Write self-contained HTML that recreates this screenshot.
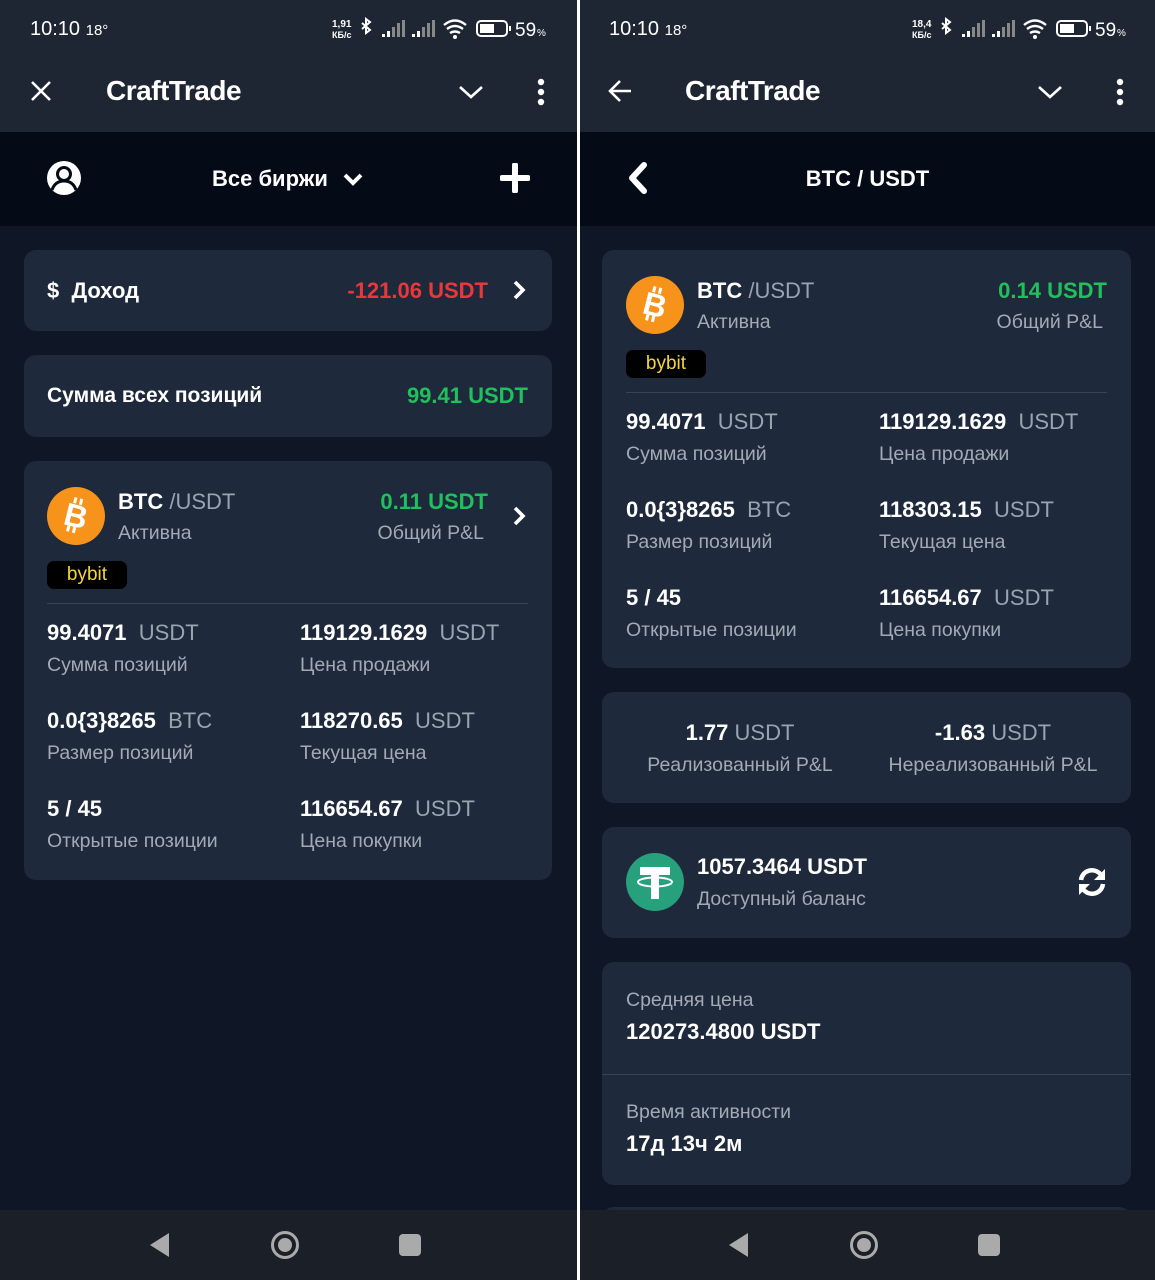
<!DOCTYPE html>
<html><head><meta charset="utf-8"><style>
*{margin:0;padding:0;box-sizing:border-box}
body{width:1155px;height:1280px;background:#fff;position:relative;overflow:hidden;font-family:"Liberation Sans",Arial,sans-serif;color:#fff}
.ph{position:absolute;top:0;height:1280px;background:#0f1727;overflow:hidden}
.sb{position:absolute;left:0;right:0;top:0;height:132px;background:#1f2633}
.sub{position:absolute;left:0;right:0;top:132px;height:94px;background:#050a17}
.card{position:absolute;background:#1e293b;border-radius:12px}
.t{position:absolute;white-space:nowrap;line-height:30px;height:30px}
.b{font-weight:bold}
.v{font-size:22px;font-weight:bold}
.u{font-size:22px;color:#9aa3b0;font-weight:normal}
.l{font-size:19.5px;color:#a3aab5}
.g{color:#20c05c}
.nav{position:absolute;left:0;right:0;top:1210px;height:70px;background:#1b1f27}
.div{position:absolute;height:1px;background:#374357}
.badge{position:absolute;background:#000;border-radius:7px;color:#f5d53a;font-size:19px;text-align:center;line-height:28px;height:28px;width:80px}
</style></head><body>

<!-- LEFT PHONE -->
<div class="ph" style="left:0;width:577px">
 <div class="sb"></div>
 <div class="t" style="left:30px;top:14px;font-size:20px">10:10 <span style="font-size:15px">18°</span></div>
 <svg style="position:absolute;left:332px;top:16px" width="220" height="26" viewBox="0 0 220 26">
  <text x="0" y="11" font-size="10" font-weight="bold" fill="#fff" font-family="Liberation Sans">1,91</text>
  <text x="0" y="22" font-size="9" font-weight="bold" fill="#fff" font-family="Liberation Sans">КБ/с</text>
  <path d="M30 7l8 7-4 3V3l4 3-8 7" stroke="#fff" stroke-width="2" fill="none"/>
  <g fill="#fff"><rect x="50" y="18" width="3" height="3"/><rect x="55" y="15" width="3" height="6"/></g><g fill="#888"><rect x="60" y="11" width="3" height="10"/><rect x="65" y="7" width="3" height="14"/><rect x="70" y="4" width="3" height="17"/></g>
  <g fill="#fff"><rect x="80" y="18" width="3" height="3"/><rect x="85" y="15" width="3" height="6"/></g><g fill="#888"><rect x="90" y="11" width="3" height="10"/><rect x="95" y="7" width="3" height="14"/><rect x="100" y="4" width="3" height="17"/></g>
  <path d="M112 9q11-9 22 0M115 13q8-6 16 0M118 17q5-3 10 0" stroke="#fff" stroke-width="2.4" fill="none"/><circle cx="123" cy="21" r="2" fill="#fff"/>
  <rect x="145" y="5" width="30" height="15" rx="4" stroke="#fff" stroke-width="2" fill="none"/><rect x="148" y="8" width="14" height="9" fill="#fff"/><rect x="177" y="10" width="2" height="5" fill="#fff"/>
  <text x="183" y="20" font-size="19" fill="#fff" font-family="Liberation Sans">59</text><text x="205" y="20" font-size="10" fill="#fff" font-family="Liberation Sans">%</text>
 </svg>
 <svg style="position:absolute;left:30px;top:80px" width="22" height="22"><path d="M2 2l18 18M20 2L2 20" stroke="#fff" stroke-width="2.6"/></svg>
 <div class="t" style="left:106px;top:74px;font-size:28px;line-height:34px;height:34px;font-weight:bold;letter-spacing:-0.5px">CraftTrade</div>
 <svg style="position:absolute;left:458px;top:84px" width="26" height="16"><path d="M2 3l11 10 11-10" stroke="#fff" stroke-width="2.6" fill="none"/></svg>
 <svg style="position:absolute;left:536px;top:78px" width="10" height="28"><circle cx="5" cy="4" r="3.2" fill="#fff"/><circle cx="5" cy="14" r="3.2" fill="#fff"/><circle cx="5" cy="24" r="3.2" fill="#fff"/></svg>
 <div class="sub"></div>
 <svg style="position:absolute;left:46px;top:160px" width="36" height="36" viewBox="0 0 36 36"><circle cx="18" cy="18" r="17" fill="#fff"/><circle cx="18" cy="14" r="6.5" fill="none" stroke="#050a17" stroke-width="3"/><path d="M6 30q3-9 12-9t12 9" fill="none" stroke="#050a17" stroke-width="3"/></svg>
 <div class="t b" style="left:212px;top:164px;font-size:22px">Все биржи</div>
 <svg style="position:absolute;left:342px;top:172px" width="22" height="16"><path d="M3 3l8 8 8-8" stroke="#fff" stroke-width="4" fill="none"/></svg>
 <svg style="position:absolute;left:500px;top:163px" width="30" height="30"><path d="M15 2v26M2 15h26" stroke="#fff" stroke-width="6" stroke-linecap="round"/></svg>

 <div class="card" style="left:24px;top:250px;width:528px;height:81px"></div>
 <div class="t b" style="left:47px;top:276px;font-size:22px">$&nbsp; Доход</div>
 <div class="t b" style="right:89px;top:276px;font-size:22px;color:#e8383d">-121.06 USDT</div>
 <svg style="position:absolute;left:512px;top:279px" width="16" height="22"><path d="M3 3l8 8-8 8" stroke="#fff" stroke-width="3.6" fill="none"/></svg>

 <div class="card" style="left:24px;top:355px;width:528px;height:82px"></div>
 <div class="t b" style="left:47px;top:381px;font-size:21px">Сумма всех позиций</div>
 <div class="t g b" style="right:49px;top:381px;font-size:22px">99.41 USDT</div>

 <div class="card" style="left:24px;top:461px;width:528px;height:419px"></div>
 <svg style="position:absolute;left:47px;top:487px" width="58" height="58" viewBox="0 0 58 58"><circle cx="29" cy="29" r="29" fill="#f7931a"/><g transform="rotate(14 29 29)"><text x="29" y="40" text-anchor="middle" font-size="32" font-weight="bold" fill="#fff" font-family="Liberation Sans">B</text><rect x="23" y="11" width="3" height="6" fill="#fff"/><rect x="29" y="11" width="3" height="6" fill="#fff"/><rect x="23" y="40" width="3" height="6" fill="#fff"/><rect x="29" y="40" width="3" height="6" fill="#fff"/></g></svg>
 <div class="t" style="left:118px;top:487px;font-size:22px"><b>BTC</b> <span style="color:#9aa3b0">/USDT</span></div>
 <div class="t l" style="left:118px;top:518px">Активна</div>
 <div class="t g b" style="right:89px;top:487px;font-size:22px">0.11 USDT</div>
 <div class="t l" style="right:93px;top:518px">Общий P&amp;L</div>
 <svg style="position:absolute;left:512px;top:505px" width="16" height="22"><path d="M3 3l8 8-8 8" stroke="#fff" stroke-width="3.6" fill="none"/></svg>
 <div class="badge" style="left:47px;top:561px">bybit</div>
 <div class="div" style="left:47px;top:603px;width:481px"></div>
 <div class="t v" style="left:47px;top:618px">99.4071 <span class="u">&nbsp;USDT</span></div>
 <div class="t l" style="left:47px;top:650px">Сумма позиций</div>
 <div class="t v" style="left:300px;top:618px">119129.1629 <span class="u">&nbsp;USDT</span></div>
 <div class="t l" style="left:300px;top:650px">Цена продажи</div>
 <div class="t v" style="left:47px;top:706px">0.0{3}8265 <span class="u">&nbsp;BTC</span></div>
 <div class="t l" style="left:47px;top:738px">Размер позиций</div>
 <div class="t v" style="left:300px;top:706px">118270.65 <span class="u">&nbsp;USDT</span></div>
 <div class="t l" style="left:300px;top:738px">Текущая цена</div>
 <div class="t v" style="left:47px;top:794px">5 / 45</div>
 <div class="t l" style="left:47px;top:826px">Открытые позиции</div>
 <div class="t v" style="left:300px;top:794px">116654.67 <span class="u">&nbsp;USDT</span></div>
 <div class="t l" style="left:300px;top:826px">Цена покупки</div>

 <div class="nav"></div>
 <svg style="position:absolute;left:148px;top:1232px" width="24" height="26"><path d="M21 1v24L2 13z" fill="#aaa"/></svg>
 <svg style="position:absolute;left:270px;top:1230px" width="30" height="30"><circle cx="15" cy="15" r="12.5" fill="none" stroke="#aaa" stroke-width="3"/><circle cx="15" cy="15" r="7" fill="#aaa"/></svg>
 <div style="position:absolute;left:399px;top:1234px;width:22px;height:22px;border-radius:4px;background:#aaa"></div>
</div>

<!-- RIGHT PHONE -->
<div class="ph" style="left:580px;width:575px">
 <div class="sb"></div>
 <div class="t" style="left:29px;top:14px;font-size:20px">10:10 <span style="font-size:15px">18°</span></div>
 <svg style="position:absolute;left:332px;top:16px" width="220" height="26" viewBox="0 0 220 26">
  <text x="0" y="11" font-size="10" font-weight="bold" fill="#fff" font-family="Liberation Sans">18,4</text>
  <text x="0" y="22" font-size="9" font-weight="bold" fill="#fff" font-family="Liberation Sans">КБ/с</text>
  <path d="M30 7l8 7-4 3V3l4 3-8 7" stroke="#fff" stroke-width="2" fill="none"/>
  <g fill="#fff"><rect x="50" y="18" width="3" height="3"/><rect x="55" y="15" width="3" height="6"/></g><g fill="#888"><rect x="60" y="11" width="3" height="10"/><rect x="65" y="7" width="3" height="14"/><rect x="70" y="4" width="3" height="17"/></g>
  <g fill="#fff"><rect x="80" y="18" width="3" height="3"/><rect x="85" y="15" width="3" height="6"/></g><g fill="#888"><rect x="90" y="11" width="3" height="10"/><rect x="95" y="7" width="3" height="14"/><rect x="100" y="4" width="3" height="17"/></g>
  <path d="M112 9q11-9 22 0M115 13q8-6 16 0M118 17q5-3 10 0" stroke="#fff" stroke-width="2.4" fill="none"/><circle cx="123" cy="21" r="2" fill="#fff"/>
  <rect x="145" y="5" width="30" height="15" rx="4" stroke="#fff" stroke-width="2" fill="none"/><rect x="148" y="8" width="14" height="9" fill="#fff"/><rect x="177" y="10" width="2" height="5" fill="#fff"/>
  <text x="183" y="20" font-size="19" fill="#fff" font-family="Liberation Sans">59</text><text x="205" y="20" font-size="10" fill="#fff" font-family="Liberation Sans">%</text>
 </svg>
 <svg style="position:absolute;left:27px;top:79px" width="26" height="24"><path d="M24 12H3M13 2L3 12l10 10" stroke="#fff" stroke-width="2.6" fill="none"/></svg>
 <div class="t" style="left:105px;top:74px;font-size:28px;line-height:34px;height:34px;font-weight:bold;letter-spacing:-0.5px">CraftTrade</div>
 <svg style="position:absolute;left:457px;top:84px" width="26" height="16"><path d="M2 3l11 10 11-10" stroke="#fff" stroke-width="2.6" fill="none"/></svg>
 <svg style="position:absolute;left:535px;top:78px" width="10" height="28"><circle cx="5" cy="4" r="3.2" fill="#fff"/><circle cx="5" cy="14" r="3.2" fill="#fff"/><circle cx="5" cy="24" r="3.2" fill="#fff"/></svg>
 <div class="sub"></div>
 <svg style="position:absolute;left:46px;top:161px" width="24" height="34"><path d="M18 4L6 17l12 13" stroke="#fff" stroke-width="6" fill="none" stroke-linecap="round" stroke-linejoin="round"/></svg>
 <div class="t b" style="left:0;width:575px;text-align:center;top:164px;font-size:22px">BTC / USDT</div>

 <div class="card" style="left:22px;top:250px;width:529px;height:418px"></div>
 <svg style="position:absolute;left:46px;top:276px" width="58" height="58" viewBox="0 0 58 58"><circle cx="29" cy="29" r="29" fill="#f7931a"/><g transform="rotate(14 29 29)"><text x="29" y="40" text-anchor="middle" font-size="32" font-weight="bold" fill="#fff" font-family="Liberation Sans">B</text><rect x="23" y="11" width="3" height="6" fill="#fff"/><rect x="29" y="11" width="3" height="6" fill="#fff"/><rect x="23" y="40" width="3" height="6" fill="#fff"/><rect x="29" y="40" width="3" height="6" fill="#fff"/></g></svg>
 <div class="t" style="left:117px;top:276px;font-size:22px"><b>BTC</b> <span style="color:#9aa3b0">/USDT</span></div>
 <div class="t l" style="left:117px;top:307px">Активна</div>
 <div class="t g b" style="right:48px;top:276px;font-size:22px">0.14 USDT</div>
 <div class="t l" style="right:52px;top:307px">Общий P&amp;L</div>
 <div class="badge" style="left:46px;top:350px">bybit</div>
 <div class="div" style="left:46px;top:392px;width:481px"></div>
 <div class="t v" style="left:46px;top:407px">99.4071 <span class="u">&nbsp;USDT</span></div>
 <div class="t l" style="left:46px;top:439px">Сумма позиций</div>
 <div class="t v" style="left:299px;top:407px">119129.1629 <span class="u">&nbsp;USDT</span></div>
 <div class="t l" style="left:299px;top:439px">Цена продажи</div>
 <div class="t v" style="left:46px;top:495px">0.0{3}8265 <span class="u">&nbsp;BTC</span></div>
 <div class="t l" style="left:46px;top:527px">Размер позиций</div>
 <div class="t v" style="left:299px;top:495px">118303.15 <span class="u">&nbsp;USDT</span></div>
 <div class="t l" style="left:299px;top:527px">Текущая цена</div>
 <div class="t v" style="left:46px;top:583px">5 / 45</div>
 <div class="t l" style="left:46px;top:615px">Открытые позиции</div>
 <div class="t v" style="left:299px;top:583px">116654.67 <span class="u">&nbsp;USDT</span></div>
 <div class="t l" style="left:299px;top:615px">Цена покупки</div>

 <div class="card" style="left:22px;top:692px;width:529px;height:111px"></div>
 <div class="t v" style="left:32px;width:256px;text-align:center;top:718px">1.77 <span class="u">USDT</span></div>
 <div class="t l" style="left:32px;width:256px;text-align:center;top:750px">Реализованный P&amp;L</div>
 <div class="t v" style="left:285px;width:256px;text-align:center;top:718px">-1.63 <span class="u">USDT</span></div>
 <div class="t l" style="left:285px;width:256px;text-align:center;top:750px">Нереализованный P&amp;L</div>

 <div class="card" style="left:22px;top:827px;width:529px;height:111px"></div>
 <svg style="position:absolute;left:46px;top:853px" width="58" height="58" viewBox="0 0 58 58"><circle cx="29" cy="29" r="29" fill="#26a17b"/><rect x="14" y="14" width="30" height="8" fill="#fff"/><rect x="25" y="14" width="8" height="32" fill="#fff"/><ellipse cx="29" cy="29" rx="17" ry="4.5" fill="none" stroke="#fff" stroke-width="2"/></svg>
 <div class="t v" style="left:117px;top:852px">1057.3464 USDT</div>
 <div class="t l" style="left:117px;top:884px">Доступный баланс</div>
 <svg style="position:absolute;left:496px;top:866px" width="32" height="32" viewBox="0 0 32 32"><path d="M5 14A11 11 0 0 1 25 9" stroke="#fff" stroke-width="4.5" fill="none"/><path d="M29 3v11H18z" fill="#fff"/><path d="M27 18A11 11 0 0 1 7 23" stroke="#fff" stroke-width="4.5" fill="none"/><path d="M3 29V18h11z" fill="#fff"/></svg>

 <div class="card" style="left:22px;top:962px;width:529px;height:223px"></div>
 <div class="t l" style="left:46px;top:985px">Средняя цена</div>
 <div class="t v" style="left:46px;top:1017px">120273.4800 USDT</div>
 <div class="div" style="left:22px;top:1074px;width:529px"></div>
 <div class="t l" style="left:46px;top:1097px">Время активности</div>
 <div class="t v" style="left:46px;top:1129px">17д 13ч 2м</div>
 <div class="card" style="left:22px;top:1207px;width:529px;height:60px"></div>

 <div class="nav"></div>
 <svg style="position:absolute;left:147px;top:1232px" width="24" height="26"><path d="M21 1v24L2 13z" fill="#aaa"/></svg>
 <svg style="position:absolute;left:269px;top:1230px" width="30" height="30"><circle cx="15" cy="15" r="12.5" fill="none" stroke="#aaa" stroke-width="3"/><circle cx="15" cy="15" r="7" fill="#aaa"/></svg>
 <div style="position:absolute;left:398px;top:1234px;width:22px;height:22px;border-radius:4px;background:#aaa"></div>
</div>
</body></html>
